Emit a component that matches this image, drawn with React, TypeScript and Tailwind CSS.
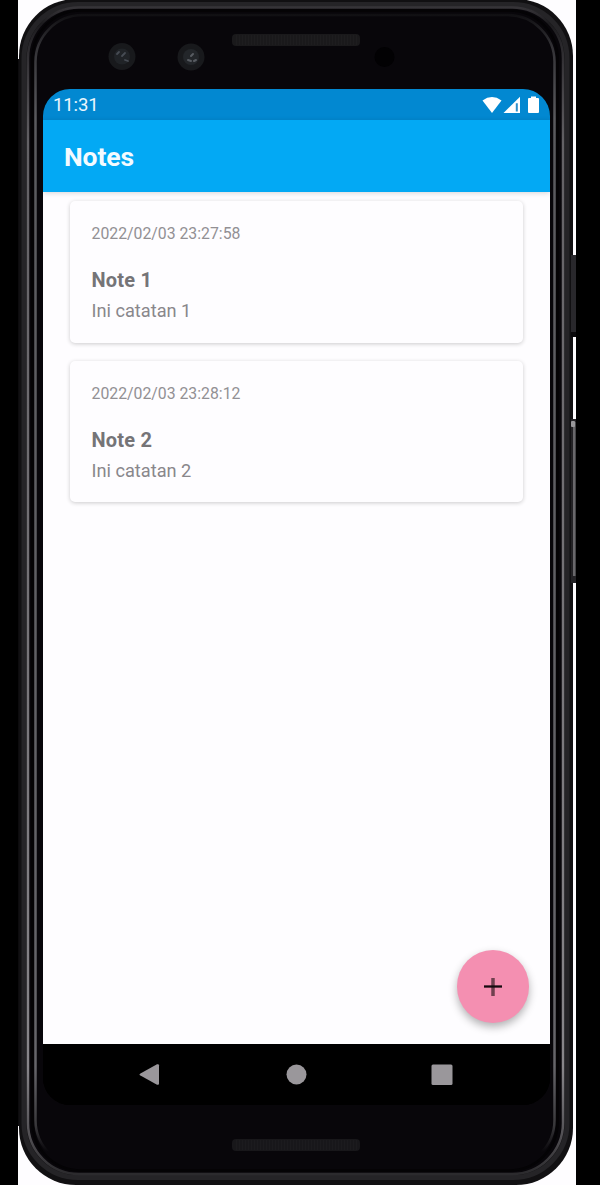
import React from "react";

const notes = [
  { date: "2022/02/03 23:27:58", title: "Note 1", body: "Ini catatan 1" },
  { date: "2022/02/03 23:28:12", title: "Note 2", body: "Ini catatan 2" },
];

function DeviceFrame() {
  return (
    <svg className="absolute inset-0 h-full w-full" viewBox="0 0 558 1185" aria-hidden="true">
      <defs>
        <linearGradient id="rim" x1="0" y1="0" x2="0" y2="1185" gradientUnits="userSpaceOnUse">
          <stop offset="0" stopColor="#403e42" />
          <stop offset="0.01" stopColor="#302e32" />
          <stop offset="0.02" stopColor="#1c1b1e" />
          <stop offset="0.05" stopColor="#333135" />
          <stop offset="0.12" stopColor="#636165" />
          <stop offset="0.9" stopColor="#88868a" />
          <stop offset="0.96" stopColor="#504e52" />
          <stop offset="0.99" stopColor="#2c2b2e" />
        </linearGradient>
        <linearGradient id="inner" x1="0" y1="0" x2="0" y2="1185" gradientUnits="userSpaceOnUse">
          <stop offset="0.012" stopColor="#100f12" />
          <stop offset="0.04" stopColor="#333236" />
          <stop offset="0.1" stopColor="#5a5a5e" />
          <stop offset="0.9" stopColor="#66656a" />
          <stop offset="0.95" stopColor="#38373a" />
          <stop offset="0.972" stopColor="#08060a" />
        </linearGradient>
      </defs>
      {/* body */}
      <rect x="0" y="59" width="3" height="1067" fill="#0c0b0d" />
      <rect x="1" y="-1" width="554" height="1186" rx="57" fill="#111012" />
      <rect x="6" y="4.500" width="543" height="1173" rx="54" fill="none" stroke="#252427" strokeWidth="5" />
      <rect x="10" y="7.500" width="535" height="1166.500" rx="51" fill="#08060a" stroke="url(#rim)" strokeWidth="2.500" />
      <rect x="14.500" y="10.500" width="525" height="1160" rx="48" fill="none" stroke="#040305" strokeWidth="2.500" />
      <rect x="17.500" y="15" width="519" height="1152" rx="47" fill="none" stroke="url(#inner)" strokeWidth="2.500" />
      {/* side buttons */}
      <rect x="553" y="255" width="5" height="82" fill="#29282c" />
      <rect x="553" y="332" width="5" height="5" fill="#0a090b" />
      <rect x="553" y="419" width="5" height="164" fill="#232225" />
      <rect x="555" y="422" width="2.500" height="154" fill="#69686b" />
      <rect x="553" y="421" width="4" height="6" rx="1" fill="#98979a" />
      {/* speakers */}
      <rect x="214" y="34" width="128" height="12" rx="4" fill="#1a191b" />
      <path d="M218 40H340" stroke="#1e1d1f" strokeWidth="10" strokeDasharray="1 2" />
      <rect x="214" y="1139" width="128" height="12" rx="4" fill="#18171a" />
      <path d="M218 1145H340" stroke="#1c1b1e" strokeWidth="10" strokeDasharray="1 2" />
      {/* cameras */}
      <circle cx="104" cy="56.500" r="13.500" fill="#18191c" />
      <circle cx="104" cy="56.500" r="8" fill="#202327" />
      <path d="M99 54l2-2M104 56l3-3M107 60l3 1" stroke="#474c54" strokeWidth="1.800" strokeLinecap="round" />
      <circle cx="173" cy="57" r="13.500" fill="#18191c" />
      <circle cx="173" cy="57" r="8" fill="#23262a" />
      <path d="M173 56l2-2M170 60l3 1M176 61l2-1" stroke="#585c62" strokeWidth="2" strokeLinecap="round" />
      <circle cx="366.500" cy="57" r="10" fill="#020103" />
    </svg>
  );
}

function StatusBar() {
  return (
    <div className="flex h-[31px] shrink-0 items-center justify-between bg-[#0288d1] pl-[10px] pr-[10px] text-[#eaf6fd]">
      <span className="pt-[2px] text-[18.5px] leading-none tracking-[-0.1px]">11:31</span>
      <svg width="58" height="18" viewBox="0 0 58 18" fill="white" aria-hidden="true">
        <path d="M0.500 4.500Q10 -2.300 19.500 4.500L10 17Z" />
        <path d="M21.500 17L38 0.800V17Z" />
        <path d="M33.800 7.300H35.800V15.500H33.800Z" fill="#2c8fca" />
        <path d="M49 0.500H54V2H56Q57 2 57 3V16Q57 17 56 17H47Q46 17 46 16V3Q46 2 47 2H49Z" />
      </svg>
    </div>
  );
}

function NavBar() {
  return (
    <nav className="flex h-[61px] shrink-0 items-start bg-black pl-[96px] pt-[20px]">
      <svg width="316" height="22" viewBox="0 0 316 22" fill="#9a979b" aria-hidden="true">
        <path d="M1 9.700L18 0.300Q20 -0.300 20 1.300V19.700Q20 21.300 18 20.700L1 11.300Q0 10.500 1 9.700Z" />
        <circle cx="157.500" cy="10.500" r="10" />
        <rect x="292.500" y="0.500" width="21" height="20.500" rx="1.500" />
      </svg>
    </nav>
  );
}

export default function App() {
  return (
    <div className="flex h-[1185px] w-[600px] overflow-hidden bg-black pl-[18px] font-[Roboto,sans-serif]">
      <div className="relative w-[558px] shrink-0 bg-[#fefdff]">
        <DeviceFrame />
        <div className="relative ml-[25px] mt-[89px] flex h-[1016px] w-[507px] flex-col overflow-hidden rounded-[27px] bg-black">
          <StatusBar />
          <header className="relative flex h-[72px] shrink-0 items-center bg-[#03a9f4] pl-[21px] pt-[3px] shadow-[0_1px_5px_rgba(0,0,0,0.16)]">
            <h1 className="text-[26.5px] leading-none font-bold tracking-[-0.1px] text-[#f4fbff]">Notes</h1>
          </header>
          <main className="flex grow flex-col gap-[18px] bg-[#fefdff] pl-[27px] pt-[9px]">
            {notes.map((note) => (
              <article
                key={note.title}
                className="flex h-[141.500px] w-[453px] flex-col rounded-[5px] bg-[#fefdff] pl-[21.500px] pt-[23px] shadow-[0_1px_4px_rgba(0,0,0,0.2)]"
              >
                <time className="text-[15.800px] leading-[20px] text-[#929094]">{note.date}</time>
                <h2 className="mt-[24px] text-[20px] leading-[24px] font-bold tracking-[0.2px] text-[#757477]">{note.title}</h2>
                <p className="mt-[8px] text-[18.200px] leading-[22px] text-[#89878b]">{note.body}</p>
              </article>
            ))}
          </main>
          <NavBar />
          <button
            aria-label="Add note"
            className="absolute left-[414px] top-[861px] flex h-[73px] w-[72px] items-center justify-center rounded-full bg-[#f48fb1] shadow-[0_4px_9px_rgba(0,0,0,0.3)]"
          >
            <svg width="18" height="18" viewBox="0 0 18 18" aria-hidden="true">
              <path d="M9 0V18" stroke="#70404f" strokeWidth="3.500" />
              <path d="M0 8.500H18" stroke="#160c10" strokeWidth="2.300" />
            </svg>
          </button>
        </div>
      </div>
    </div>
  );
}
